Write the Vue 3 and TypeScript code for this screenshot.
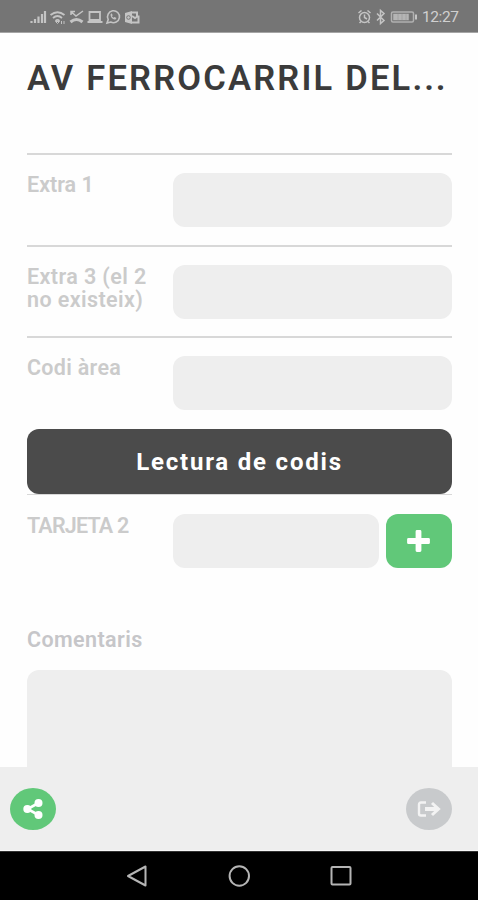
<script setup lang="ts">
import { ref } from 'vue'

interface Field {
  id: string
  label: string
  spacing: string
}

const fields: Field[] = [
  { id: 'extra1', label: 'Extra 1', spacing: 'tight' },
  { id: 'extra3', label: 'Extra 3 (el 2 no existeix)', spacing: 'normal' },
  { id: 'area', label: 'Codi àrea', spacing: 'medium' },
]
const values = ref<Record<string, string>>({ extra1: '', extra3: '', area: '', card: '' })
const comments = ref('')
</script>

<template>
  <div class="screen">
    <header class="status">
      <svg class="status-left" width="112" height="18" viewBox="0 0 112 18" fill="none" stroke="#c4c4c4" stroke-width="1.5">
        <path d="M1.500 15v-2M5 15v-4M8.500 15V8.500M12 15V6M15 15V3" stroke-width="2.200" />
        <path d="M20.500 7Q27.500 1.500 34.500 7M23 10Q27.500 6 32 10M25.500 12.800Q27.500 11 29.500 12.800" stroke-width="1.800" />
        <path d="M27.500 15.500l-2-2h4zM31.500 13v3M34 13v3" stroke-width="1" />
        <path d="M41 3.500l5 4.500 7-5M41 7V3.500h4" />
        <path d="M40.500 14q6-5 12 0" stroke-width="3" />
        <path d="M59.500 4h10.500v8H59.500zM57.500 14h15" stroke-width="1.800" />
        <path d="M77 15l1.200-3.500a6 6 0 1 1 2.500 2.500z" stroke-width="1.600" />
        <path d="M80.500 6.500c0 3 2.500 5 5 5l1-1.500-2-1-1 .8-1.600-1.600.8-1-1-2z" fill="#c4c4c4" stroke="none" />
        <path d="M95 5l7-2v13l-7-2z" fill="#c4c4c4" stroke="none" />
        <circle cx="98.500" cy="9.500" r="1.800" stroke="#777" stroke-width="1" />
        <path d="M102 4.500h5v4h1.500v6H102M102 8l3 2 3-2" stroke-width="2" />
      </svg>
      <div class="status-right">
        <svg width="62" height="18" viewBox="0 0 62 18" fill="none" stroke="#c4c4c4" stroke-width="1.500">
          <circle cx="7.500" cy="9.500" r="5" />
          <path d="M1.500 5l3-2.500M13.500 5l-3-2.500M7.500 6.500v3l2.500 1.500M4 13.500L2.500 15M11 13.500l1.500 1.500" />
          <path d="M20 5.500l7 7-3.500 3v-13l3.500 3-7 7" />
          <rect x="34.500" y="4" width="22" height="10" rx="1.500" stroke="#b0b0b0" />
          <path d="M37 6.500h14v5H37z" fill="#b5b5b5" stroke="#b5b5b5" />
          <path d="M41 6v6M45 6v6M49 6v6" stroke="#a0a0a0" stroke-width=".8" />
          <path d="M59 6.500v5" stroke-width="2" />
        </svg>
        <span class="clock">12:27</span>
      </div>
    </header>

    <main class="content">
      <h1 class="title">AV FERROCARRIL DEL<span class="dots">...</span></h1>
      <div v-for="f in fields" :key="f.id" class="row">
        <label :for="f.id" class="label" :class="f.spacing">{{ f.label }}</label>
        <input :id="f.id" v-model="values[f.id]" class="input" type="text" />
      </div>
      <button class="read">Lectura de codis</button>
      <div class="row card-row">
        <label for="card" class="label card-label">TARJETA 2</label>
        <input id="card" v-model="values.card" class="input" type="text" />
        <button class="add">
          <svg width="24" height="22" viewBox="0 0 24 22"><path d="M10 1.500h3v7.800h8.500v3.400H13v7.800h-3v-7.800H1.500V9.300H10z" fill="#fff" stroke="#fff" stroke-width="2.800" stroke-linejoin="round" /></svg>
        </button>
      </div>
      <label for="comments" class="label comments-label">Comentaris</label>
      <textarea id="comments" v-model="comments" class="comments"></textarea>
    </main>

    <footer class="actions">
      <button class="round share">
        <svg width="20" height="20" viewBox="0 0 20 20" fill="#fff">
          <path d="M15.500 4L4.500 10l11 6" fill="none" stroke="#fff" stroke-width="2.600" />
          <circle cx="15.500" cy="4" r="4" /><circle cx="4.300" cy="10" r="4" /><circle cx="15.500" cy="16" r="4" />
        </svg>
      </button>
      <button class="round exit">
        <svg width="24" height="16" viewBox="0 0 24 16" fill="none" stroke="#f3f3f3" stroke-width="2.400">
          <path d="M9 1.500H4Q2 1.500 2 3.500v9q0 2 2 2h5" />
          <path d="M8 8h13" stroke-width="4" />
          <path d="M15 2l6.500 6-6.500 6" stroke-width="3" />
        </svg>
      </button>
    </footer>

    <nav class="system">
      <svg width="22" height="22" viewBox="0 0 22 22"><path d="M2 11L19.500 1.500v19z" /></svg>
      <svg width="22" height="22" viewBox="0 0 22 22"><circle cx="11.300" cy="11" r="9.700" /></svg>
      <svg width="22" height="22" viewBox="0 0 22 22"><rect x="1.500" y="2" width="19" height="17.500" rx="1" /></svg>
    </nav>
  </div>
</template>

<style>
body {
  margin: 0;
  background: #fff;
}
</style>

<style scoped>
.screen {
  width: 478px;
  height: 900px;
  display: flex;
  flex-direction: column;
  overflow: hidden;
  background: #fefefe;
  font-family: Roboto, 'Liberation Sans', sans-serif;
}
.screen * {
  box-sizing: border-box;
}
button,
input,
textarea {
  border: 0;
  margin: 0;
  padding: 0;
  outline: 0;
  font-family: inherit;
}
.status {
  flex: none;
  height: 33px;
  padding: 1px 19px 0 30px;
  display: flex;
  align-items: center;
  justify-content: space-between;
  background: #757575;
  border-bottom: 1px solid #a5a5a5;
}
.status-right {
  display: flex;
  align-items: center;
  gap: 3px;
}
.clock {
  font-size: 15.500px;
  line-height: 18px;
  width: 37px;
  letter-spacing: -0.400px;
  white-space: nowrap;
  color: #d0d0d0;
}
.content {
  flex: 1;
  min-height: 0;
  overflow: hidden;
  padding: 24px 26px 0 27px;
  display: flex;
  flex-direction: column;
}
.title {
  flex: none;
  height: 96px;
  margin: 0;
  font-size: 34.500px;
  line-height: 42px;
  font-weight: 600;
  letter-spacing: 2.200px;
  white-space: nowrap;
  color: #3b3b3b;
}
.dots {
  letter-spacing: 1.900px;
}
.row {
  flex: none;
  height: 91.500px;
  padding-top: 18px;
  border-top: 2px solid #d8d8d8;
  display: flex;
  align-items: flex-start;
}
.label {
  flex: none;
  width: 146px;
  padding-right: 20px;
  font-size: 21.500px;
  line-height: 23.600px;
  font-weight: 600;
  letter-spacing: 0.400px;
  color: #cbcbcb;
}
.tight {
  letter-spacing: 0;
}
.medium {
  letter-spacing: 0.300px;
}
.input {
  flex: 1;
  min-width: 0;
  height: 54px;
  border-radius: 12px;
  background: #eee;
}
.read {
  flex: none;
  height: 65px;
  margin-top: 1.500px;
  border-radius: 12px;
  background: #4b4b4b;
  color: #fff;
  font-size: 24px;
  line-height: 28px;
  font-weight: 700;
  letter-spacing: 1.800px;
}
.card-row {
  height: 132px;
  padding-top: 19px;
  border-top-width: 1px;
}
.card-label {
  letter-spacing: -0.800px;
}
.add {
  width: 66px;
  height: 54px;
  margin-left: 7px;
  border-radius: 12px;
  background: #61c879;
  display: flex;
  align-items: center;
  justify-content: center;
}
.comments-label {
  height: 44px;
  padding-top: 2px;
  color: #c6c6c9;
}
.comments {
  flex: none;
  height: 130px;
  resize: none;
  border-radius: 12px;
  background: #eee;
}
.actions {
  flex: none;
  height: 84px;
  padding: 1px 26px 0 10px;
  display: flex;
  align-items: center;
  justify-content: space-between;
  background: #eee;
  border-bottom: 1px solid #f8f8f8;
}
.round {
  width: 46px;
  height: 42px;
  border-radius: 50%;
  display: flex;
  align-items: center;
  justify-content: center;
}
.share {
  background: #61c879;
}
.exit {
  background: #c8cacc;
}
.system {
  flex: none;
  height: 49px;
  padding: 0 126px;
  display: flex;
  align-items: center;
  justify-content: space-between;
  background: #000;
  border-top: 1px solid #333;
}
.system svg {
  fill: none;
  stroke: #b5b5b5;
  stroke-width: 2;
  stroke-linejoin: round;
}
</style>
